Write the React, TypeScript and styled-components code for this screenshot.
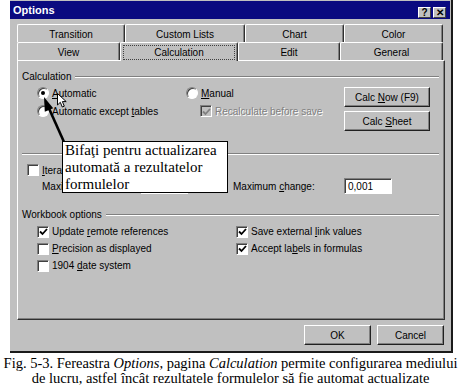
import React from "react";
import styled, { createGlobalStyle } from "styled-components";

const GlobalStyle = createGlobalStyle`
  html, body {
    margin: 0;
    padding: 0;
    background: #ffffff;
  }
  body {
    font-family: "Liberation Sans", Arial, sans-serif;
    font-size: 10px;
    color: #000;
  }
`;

const topTabs = [
  { title: "Transition", width: 108 },
  { title: "Custom Lists", width: 120 },
  { title: "Chart", width: 99 },
  { title: "Color", width: 99 },
];

const bottomTabs = [
  { title: "View", width: 103 },
  { title: "Calculation", width: 118, active: true },
  { title: "Edit", width: 102 },
  { title: "General", width: 103 },
];

function CheckMark({ disabled }: { disabled?: boolean }) {
  return (
    <svg width="9" height="8" viewBox="0 0 9 8">
      <path
        d="M1 3.5 L3.5 6 L8 1"
        fill="none"
        stroke={disabled ? "#808080" : "#000"}
        strokeWidth="1.8"
      />
    </svg>
  );
}

function App() {
  return (
    <Page>
      <GlobalStyle />
      <Dialog>
        <TitleBar>
          <Title>Options</Title>
          <TitleButtons>
            <CaptionButton>?</CaptionButton>
            <CaptionButton>✕</CaptionButton>
          </TitleButtons>
        </TitleBar>

        <Body>
          <TabRow>
            {topTabs.map((t) => (
              <Tab key={t.title} $width={t.width}>
                {t.title}
              </Tab>
            ))}
          </TabRow>
          <TabRow>
            {bottomTabs.map((t) => (
              <Tab key={t.title} $width={t.width} $active={t.active}>
                {t.active ? <Focus>{t.title}</Focus> : t.title}
              </Tab>
            ))}
          </TabRow>

          <Panel>
            <GroupHeader>
              <span>Calculation</span>
              <Groove />
            </GroupHeader>

            <CalcBody>
              <RadioCol>
                <OptionRow>
                  <Radio $checked />
                  <span>
                    <u>A</u>utomatic
                  </span>
                </OptionRow>
                <OptionRow>
                  <Radio />
                  <span>
                    Automatic except <u>t</u>ables
                  </span>
                </OptionRow>
              </RadioCol>
              <ManualCol>
                <OptionRow>
                  <Radio />
                  <span>
                    <u>M</u>anual
                  </span>
                </OptionRow>
                <OptionRow $indent={14}>
                  <Check $disabled>
                    <CheckMark disabled />
                  </Check>
                  <Disabled>Recalculate before save</Disabled>
                </OptionRow>
              </ManualCol>
              <ButtonCol>
                <Button $width={86}>
                  <span>
                    Calc <u>N</u>ow (F9)
                  </span>
                </Button>
                <Button $width={86}>
                  <span>
                    Calc <u>S</u>heet
                  </span>
                </Button>
              </ButtonCol>
            </CalcBody>

            <Separator />

            <IterBody>
              <OptionRow $height={16}>
                <Check />
                <span>
                  <u>I</u>teration
                </span>
              </OptionRow>
              <MaxRow>
                <MaxLabel $width={98}>Maximum iterations:</MaxLabel>
                <Field $width={48}>100</Field>
                <Spacer $width={45} />
                <MaxLabel $width={111}>
                  Maximum <u>c</u>hange:
                </MaxLabel>
                <Field $width={48}>0,001</Field>
              </MaxRow>
            </IterBody>

            <GroupHeader $top={14}>
              <span>Workbook options</span>
              <Groove />
            </GroupHeader>

            <WorkbookGrid>
              <OptionRow $height={17}>
                <Check>
                  <CheckMark />
                </Check>
                <span>
                  Update <u>r</u>emote references
                </span>
              </OptionRow>
              <OptionRow $height={17}>
                <Check>
                  <CheckMark />
                </Check>
                <span>
                  Save external <u>l</u>ink values
                </span>
              </OptionRow>
              <OptionRow $height={17}>
                <Check />
                <span>
                  <u>P</u>recision as displayed
                </span>
              </OptionRow>
              <OptionRow $height={17}>
                <Check>
                  <CheckMark />
                </Check>
                <span>
                  Accept la<u>b</u>els in formulas
                </span>
              </OptionRow>
              <OptionRow $height={17}>
                <Check />
                <span>
                  1904 <u>d</u>ate system
                </span>
              </OptionRow>
            </WorkbookGrid>

            {/* annotation laid over the dialog */}
            <Arrow width="60" height="90" viewBox="0 0 60 90">
              <line x1="46" y1="81" x2="29" y2="43" stroke="#000" strokeWidth="2.6" />
              <polygon points="26,36 26.8,50.8 35.2,47.2" fill="#000" />
            </Arrow>
            <Cursor width="12" height="16" viewBox="0 0 12 16">
              <path
                d="M0.5 0.5 L0.5 12 L3.3 9.3 L5.3 14 L7.3 13.2 L5.4 8.6 L9.2 8.6 Z"
                fill="#fff"
                stroke="#000"
                strokeWidth="1"
              />
            </Cursor>
            <Callout>
              Bifaţi pentru actualizarea
              <br />
              automată a rezultatelor
              <br />
              formulelor
            </Callout>
          </Panel>

          <Footer>
            <Button $width={67} $height={20}>
              OK
            </Button>
            <Button $width={67} $height={20}>
              Cancel
            </Button>
          </Footer>
        </Body>
      </Dialog>

      <FigCaption>
        <div>
          Fig. 5-3. Fereastra <i>Options</i>, pagina <i>Calculation</i> permite
          configurarea mediului
        </div>
        <div>de lucru, astfel încât rezultatele formulelor să fie automat actualizate</div>
      </FigCaption>
    </Page>
  );
}

const Page = styled.div`
  width: 461px;
  height: 386px;
  overflow: hidden;
  background: #fff;
`;

const Dialog = styled.div`
  margin-left: 10px;
  width: 441px;
  background: #c0c0c0;
  border-right: 2px solid #1a1a1a;
  border-bottom: 2px solid #1a1a1a;
  padding-top: 1px;
`;

const TitleBar = styled.div`
  height: 18px;
  background: #0a0a80;
  display: flex;
  align-items: center;
  justify-content: space-between;
  padding: 0 4px 0 3px;
  margin-right: 1px;
`;

const Title = styled.span`
  color: #fff;
  font-weight: 700;
  font-size: 11px;
`;

const TitleButtons = styled.div`
  display: flex;
  gap: 2px;
  margin-top: 4px;
`;

const CaptionButton = styled.div`
  width: 13px;
  height: 11px;
  background: #c0c0c0;
  box-sizing: border-box;
  border-top: 1px solid #fff;
  border-left: 1px solid #fff;
  border-right: 1px solid #404040;
  border-bottom: 1px solid #404040;
  font-size: 10px;
  font-weight: 700;
  line-height: 9px;
  text-align: center;
`;

const Body = styled.div`
  padding: 5px 6px 6px 7px;
`;

const TabRow = styled.div`
  display: flex;
  height: 18px;
`;

const Tab = styled.div<{ $width: number; $active?: boolean }>`
  width: ${(p) => p.$width}px;
  height: ${(p) => (p.$active ? 19 : 18)}px;
  box-sizing: border-box;
  border-top: 1px solid #fff;
  border-left: 1px solid #fff;
  border-right: 1px solid #303030;
  border-radius: 2px 2px 0 0;
  box-shadow: inset -1px 0 0 #808080;
  display: flex;
  align-items: center;
  justify-content: center;
  padding-top: 1px;
  position: relative;
  z-index: ${(p) => (p.$active ? 2 : 0)};
  background: #c0c0c0;
  color: #000;
`;

const Focus = styled.span`
  display: flex;
  align-items: center;
  justify-content: center;
  width: 110px;
  height: 13px;
  border: 1px dotted #404040;
`;

const Panel = styled.div`
  position: relative;
  height: 258px;
  border-top: 1px solid #fff;
  border-left: 1px solid #fff;
  border-right: 1px solid #303030;
  border-bottom: 1px solid #303030;
  box-shadow: inset -1px -1px 0 #808080;
`;

const GroupHeader = styled.div<{ $top?: number }>`
  display: flex;
  align-items: center;
  gap: 4px;
  height: 12px;
  margin: ${(p) => p.$top ?? 9}px 5px 0 4px;
`;

const Groove = styled.div`
  flex: 1;
  height: 0;
  border-top: 1px solid #808080;
  border-bottom: 1px solid #fff;
  margin-top: 1px;
`;

const CalcBody = styled.div`
  display: flex;
  padding: 2px 0 0 19px;
`;

const RadioCol = styled.div`
  width: 149px;
`;

const ManualCol = styled.div`
  width: 158px;
`;

const ButtonCol = styled.div`
  display: flex;
  flex-direction: column;
  gap: 4px;
  padding-top: 3px;
`;

const OptionRow = styled.div<{ $indent?: number; $height?: number }>`
  display: flex;
  align-items: center;
  gap: 3px;
  height: ${(p) => p.$height ?? 18}px;
  padding-left: ${(p) => p.$indent ?? 0}px;
  white-space: nowrap;
`;

const Radio = styled.span<{ $checked?: boolean }>`
  width: 12px;
  height: 12px;
  border-radius: 50%;
  flex: none;
  box-sizing: border-box;
  background: #fff;
  border: 1px solid;
  border-color: #808080 #fff #fff #808080;
  box-shadow: inset 1px 1px 0 #404040;
  display: flex;
  align-items: center;
  justify-content: center;
  &::after {
    content: "";
    width: 4px;
    height: 4px;
    border-radius: 50%;
    background: ${(p) => (p.$checked ? "#000" : "transparent")};
  }
`;

const Check = styled.span<{ $disabled?: boolean }>`
  width: 12px;
  height: 12px;
  flex: none;
  box-sizing: border-box;
  background: ${(p) => (p.$disabled ? "#c0c0c0" : "#fff")};
  border: 1px solid;
  border-color: #808080 #fff #fff #808080;
  box-shadow: inset 1px 1px 0 #404040;
  display: flex;
  align-items: center;
  justify-content: center;
  padding: 1px 0 0 1px;
`;

const Disabled = styled.span`
  color: #808080;
  text-shadow: 1px 1px 0 #fff;
`;

const Button = styled.div<{ $width: number; $height?: number }>`
  width: ${(p) => p.$width}px;
  height: ${(p) => p.$height ?? 20}px;
  box-sizing: border-box;
  background: #c0c0c0;
  border-top: 1px solid #fff;
  border-left: 1px solid #fff;
  border-right: 1px solid #202020;
  border-bottom: 1px solid #202020;
  box-shadow: inset -1px -1px 0 #808080;
  display: flex;
  align-items: center;
  justify-content: center;
  white-space: nowrap;
`;

const Separator = styled.div`
  margin: 22px 5px 0 4px;
  border-top: 1px solid #808080;
  border-bottom: 1px solid #fff;
`;

const IterBody = styled.div`
  padding: 7px 0 0 9px;
`;

const MaxRow = styled.div`
  display: flex;
  align-items: center;
  height: 16px;
  padding-left: 15px;
  white-space: nowrap;
`;

const MaxLabel = styled.span<{ $width: number }>`
  width: ${(p) => p.$width}px;
`;

const Spacer = styled.span<{ $width: number }>`
  width: ${(p) => p.$width}px;
`;

const Field = styled.div<{ $width: number }>`
  width: ${(p) => p.$width}px;
  height: 16px;
  box-sizing: border-box;
  background: #fff;
  border: 1px solid;
  border-color: #808080 #fff #fff #808080;
  box-shadow: inset 1px 1px 0 #404040;
  padding: 1px 0 0 3px;
  display: flex;
  align-items: center;
`;

const WorkbookGrid = styled.div`
  display: grid;
  grid-template-columns: 199px 1fr;
  padding: 3px 0 0 19px;
`;

const Arrow = styled.svg`
  position: absolute;
  left: 0;
  top: 0;
  z-index: 3;
`;

const Cursor = styled.svg`
  position: absolute;
  left: 39px;
  top: 32px;
  z-index: 2;
`;

const Callout = styled.div`
  position: absolute;
  left: 44px;
  top: 80px;
  width: 166px;
  height: 52px;
  box-sizing: border-box;
  background: #fff;
  border: 1px solid #000;
  padding: 0 0 0 2px;
  font-family: "Liberation Serif", "Times New Roman", serif;
  font-size: 15px;
  line-height: 17px;
  white-space: nowrap;
  z-index: 4;
`;

const Footer = styled.div`
  display: flex;
  justify-content: flex-end;
  gap: 6px;
  padding: 5px 1px 0 0;
`;

const FigCaption = styled.div`
  font-family: "Liberation Serif", "Times New Roman", serif;
  font-size: 14.5px;
  line-height: 15px;
  text-align: center;
  white-space: nowrap;
  margin-top: 3px;
`;

export default App;
